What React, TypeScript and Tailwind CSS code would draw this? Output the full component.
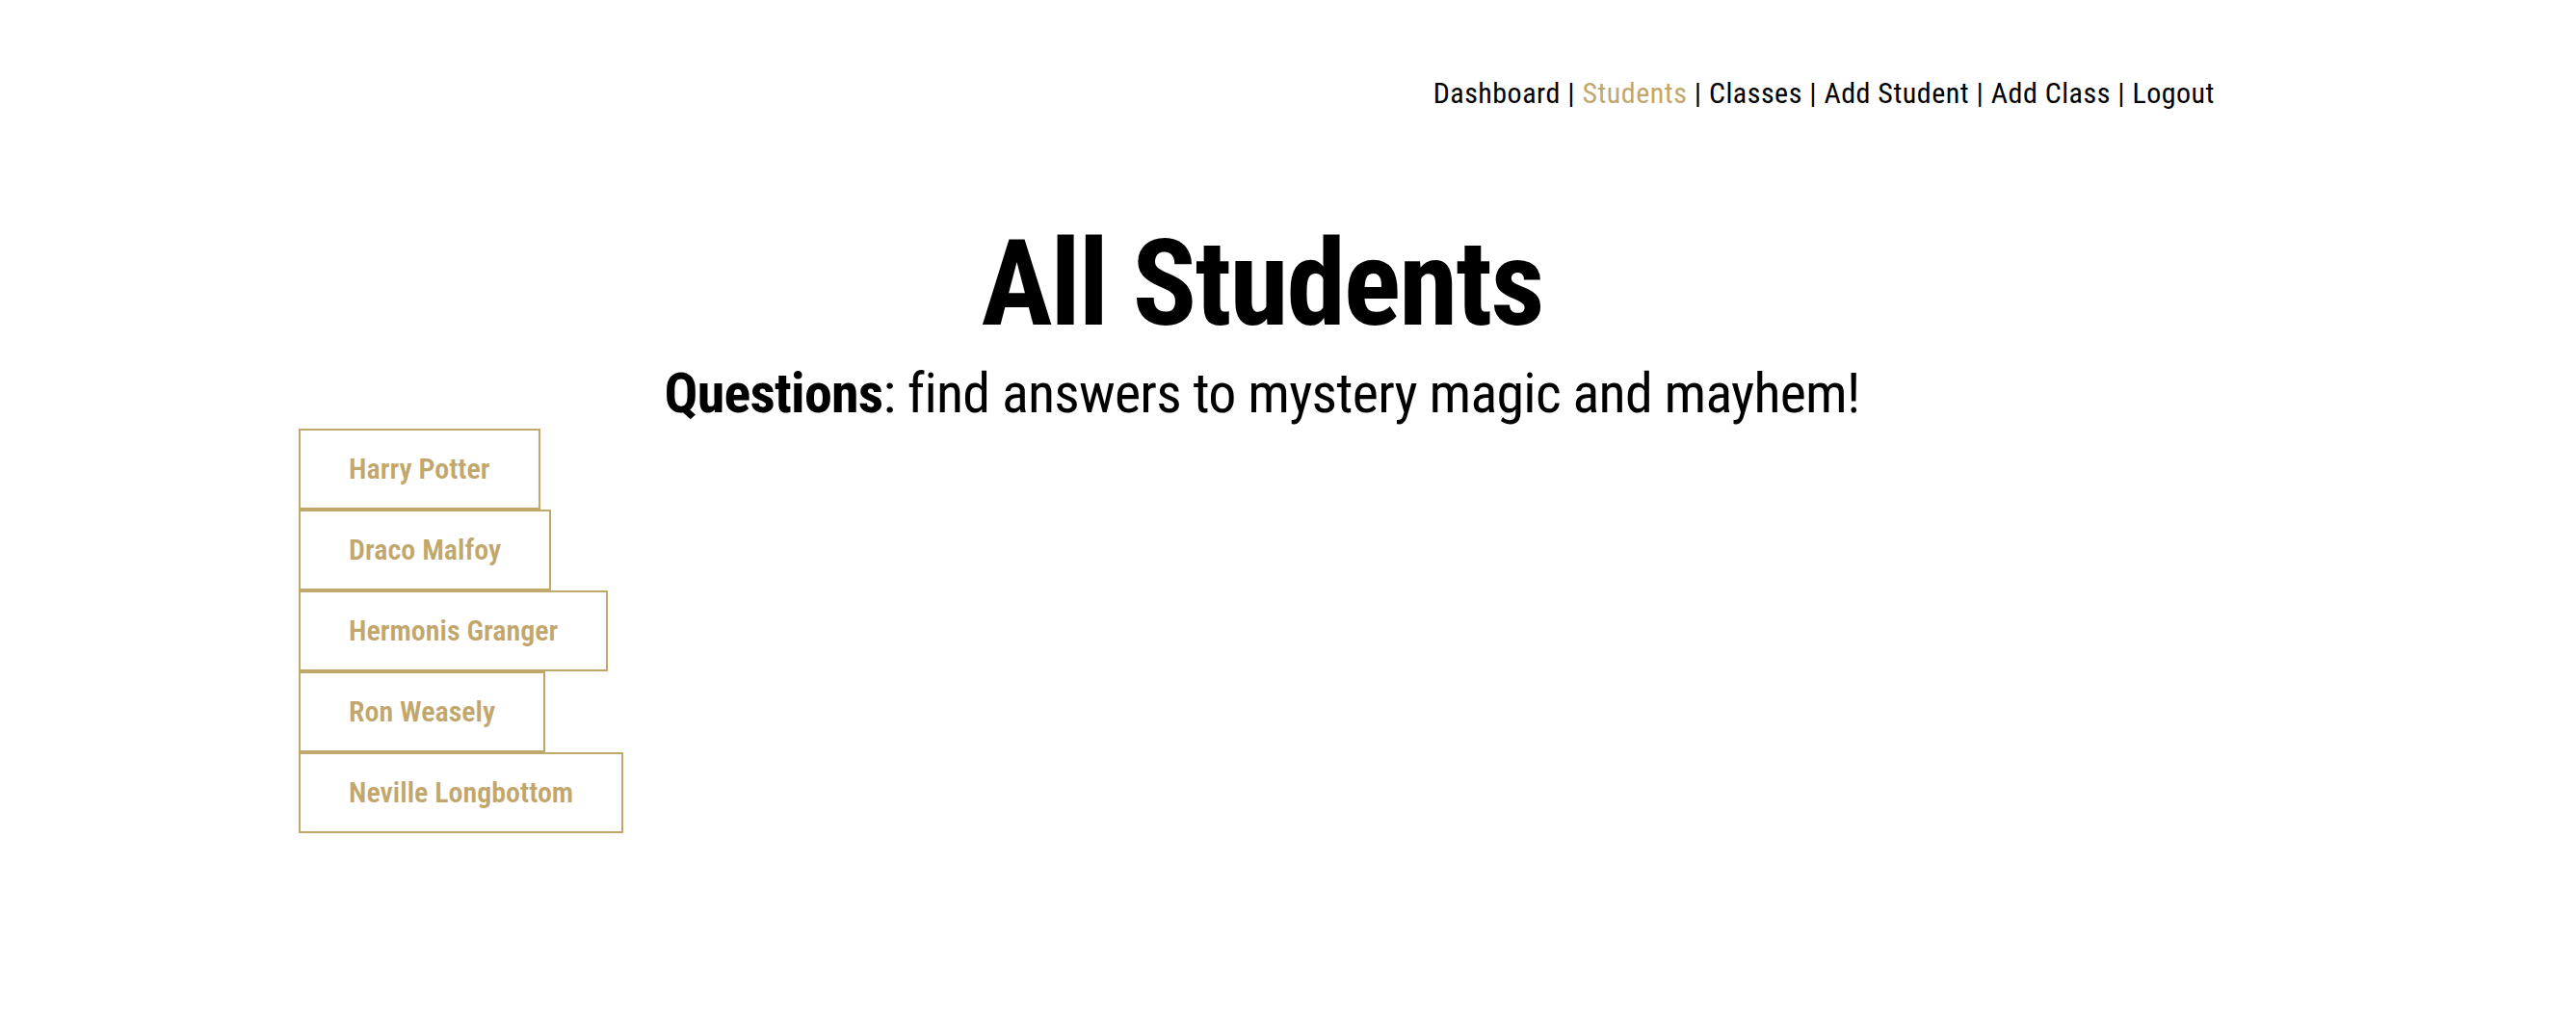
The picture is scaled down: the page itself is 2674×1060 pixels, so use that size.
const links = ["Dashboard", "Students", "Classes", "Add Student", "Add Class", "Logout"];
const students = ["Harry Potter", "Draco Malfoy", "Hermonis Granger", "Ron Weasely", "Neville Longbottom"];

function NavBar() {
  return (
    <nav className="flex justify-end pt-[79px] pr-[375px] text-[30px] leading-[36px] font-normal tracking-[0.5px] text-black">
      {links.map((l, i) => (
        <span key={l} className="whitespace-pre">
          {i > 0 && " | "}
          <a href="#" className={l === "Students" ? "text-[#c2a76d]" : "text-black"}>
            {l}
          </a>
        </span>
      ))}
    </nav>
  );
}

export default function App() {
  return (
    <div className="min-h-screen bg-white font-['Roboto_Condensed','Roboto',sans-serif]">
      <NavBar />
      <main className="pl-[310px] pr-[364px]">
        <h1 className="mt-[118px] text-center text-[124px] leading-[124px] font-bold tracking-[-2px] text-black">
          All Students
        </h1>
        <p className="mt-[22px] text-center text-[58px] leading-[58px] tracking-[-0.75px] text-black">
          <span className="font-bold">Questions</span>: find answers to mystery magic and mayhem!
        </p>
        <div className="mt-[8px] flex flex-col items-start">
          {students.map((s) => (
            <button
              key={s}
              className="h-[84px] border-2 border-[#c2a76d] bg-white px-[50px] text-[30px] leading-[80px] font-semibold text-[#c2a76d]"
            >
              {s}
            </button>
          ))}
        </div>
      </main>
    </div>
  );
}
